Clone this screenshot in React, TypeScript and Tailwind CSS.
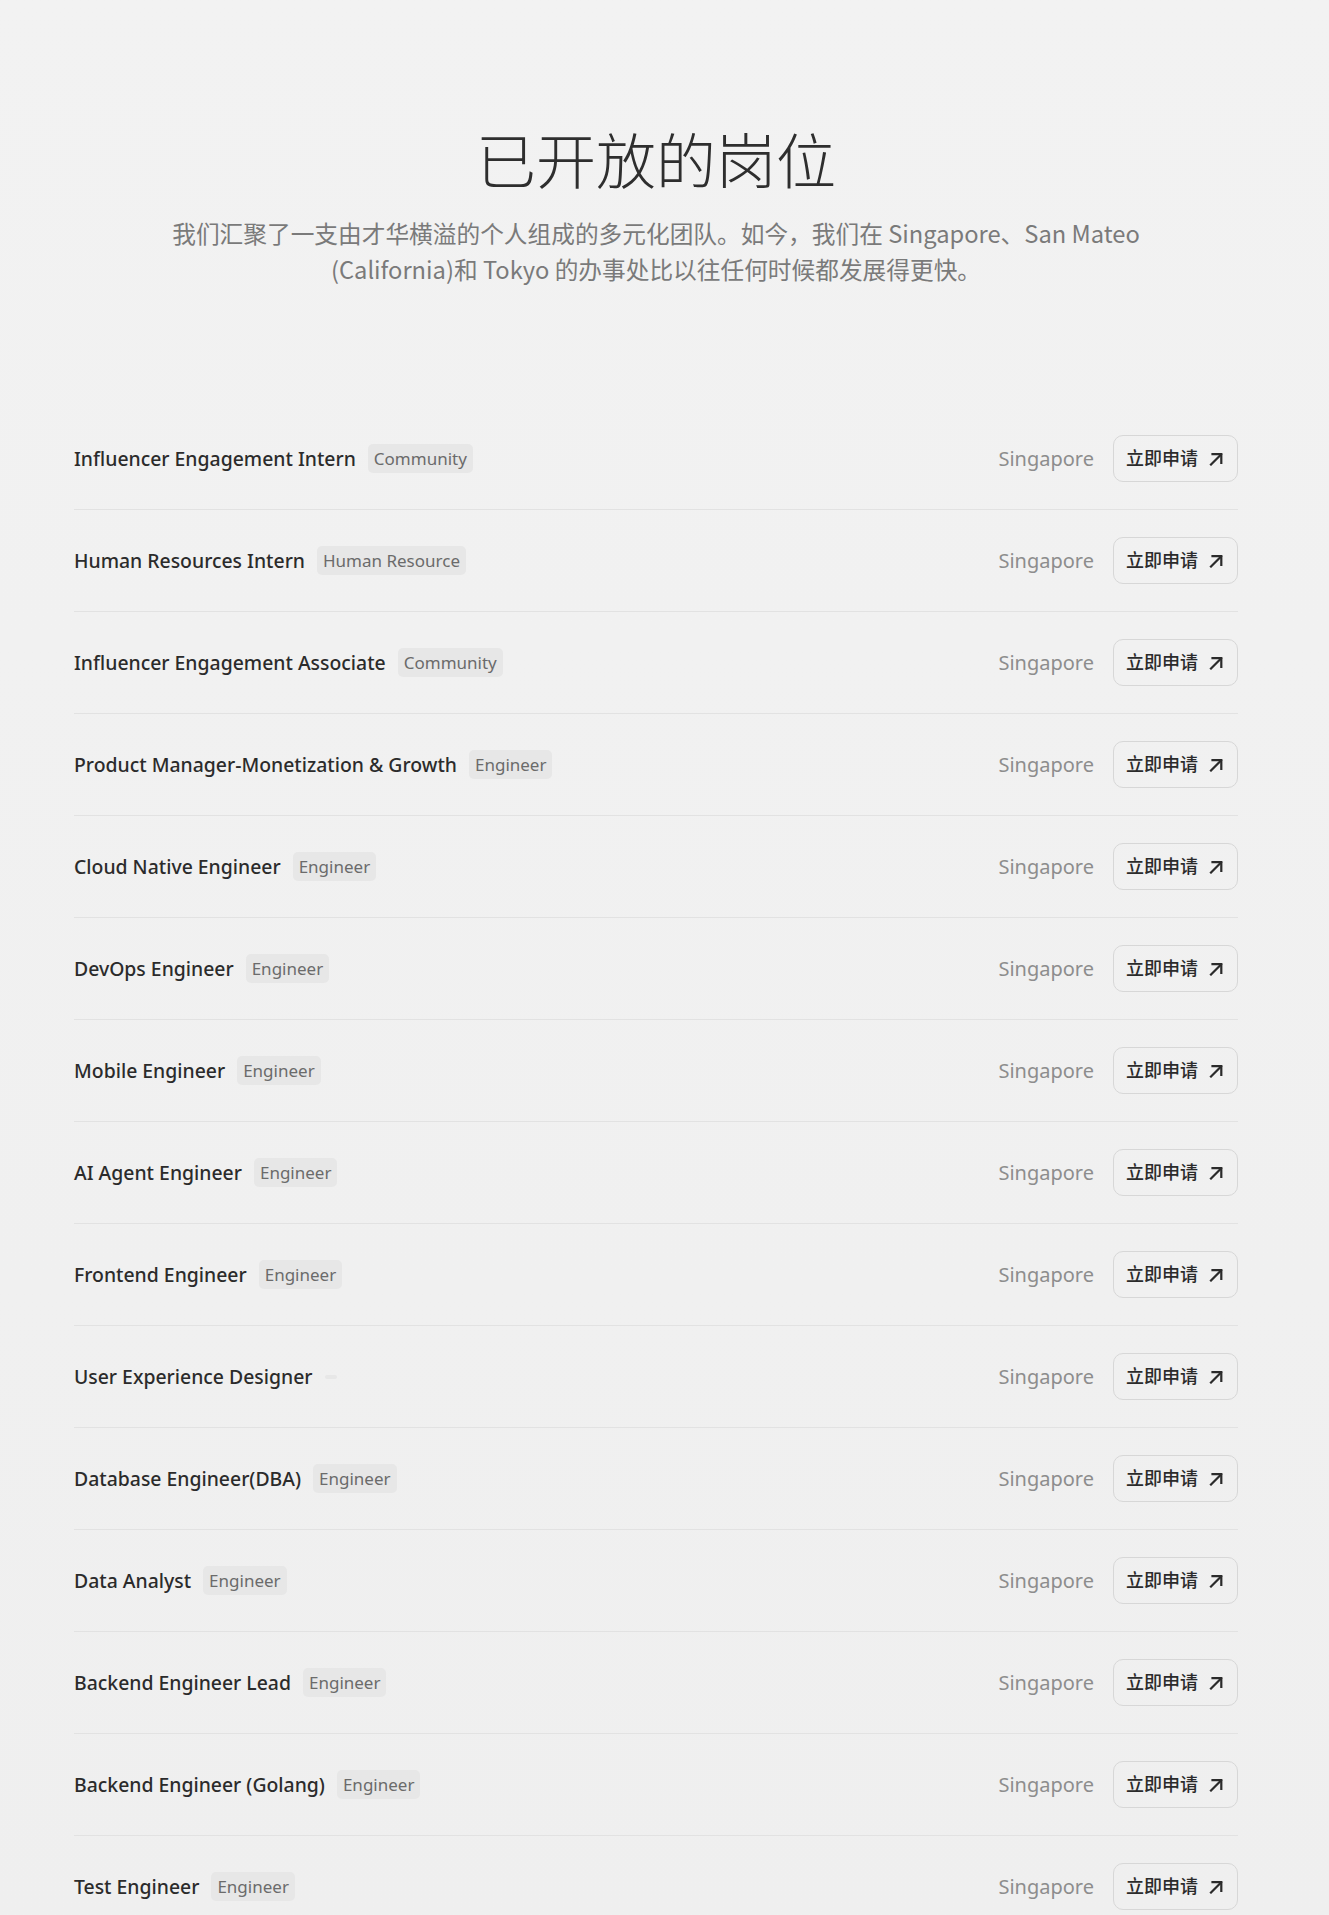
import React from 'react';

type Job = { title: string; tag: string };

const jobs: Job[] = [
  { title: 'Influencer Engagement Intern', tag: 'Community' },
  { title: 'Human Resources Intern', tag: 'Human Resource' },
  { title: 'Influencer Engagement Associate', tag: 'Community' },
  { title: 'Product Manager-Monetization & Growth', tag: 'Engineer' },
  { title: 'Cloud Native Engineer', tag: 'Engineer' },
  { title: 'DevOps Engineer', tag: 'Engineer' },
  { title: 'Mobile Engineer', tag: 'Engineer' },
  { title: 'AI Agent Engineer', tag: 'Engineer' },
  { title: 'Frontend Engineer', tag: 'Engineer' },
  { title: 'User Experience Designer', tag: '' },
  { title: 'Database Engineer(DBA)', tag: 'Engineer' },
  { title: 'Data Analyst', tag: 'Engineer' },
  { title: 'Backend Engineer Lead', tag: 'Engineer' },
  { title: 'Backend Engineer (Golang)', tag: 'Engineer' },
  { title: 'Test Engineer', tag: 'Engineer' },
];

const ArrowIcon = () => (
  <svg width="14" height="14" viewBox="0 0 14 14" fill="none" stroke="currentColor" strokeWidth="2.2" strokeLinecap="square">
    <path d="M2 12.5L12 2.5" />
    <path d="M3.5 2.2H12.3V11" />
  </svg>
);

const JobRow = ({ job }: { job: Job }) => (
  <div className="flex items-center justify-between border-b border-[#e2e2e2] py-[27px]">
    <div className="flex items-center gap-3">
      <span className="text-[19.4px] font-medium leading-[28px] text-[#2b2b2b]">{job.title}</span>
      <span className="rounded-[5px] bg-[#e7e7e7] px-[6px] py-[2px] text-[17px] leading-[25px] text-[#6b6b6b] empty:leading-[0px]">
        {job.tag}
      </span>
    </div>
    <div className="flex items-center gap-[19px]">
      <span className="text-[20px] text-[#8d8d8d]">Singapore</span>
      <button className="flex h-[47px] w-[125px] items-center gap-[11px] rounded-[10px] border border-[#d7d7d7] px-3 text-[18px] font-medium text-[#2b2b2b]">
        立即申请
        <ArrowIcon />
      </button>
    </div>
  </div>
);

export default function App() {
  return (
    <div
      className="min-h-[1915px] w-full bg-gradient-to-b from-[#f2f2f2] to-[#efefef]"
      style={{ fontFamily: '"Noto Sans", "Noto Sans CJK SC", sans-serif' }}
    >
      <div className="w-[1312px] px-[74px] pt-[122px]">
        <h1
          className="text-center text-[60px] font-light leading-[72px] text-[#2e2e2e]"
          style={{ fontFamily: '"Noto Sans CJK SC", sans-serif' }}
        >
          已开放的岗位
        </h1>
        <p
          className="mt-[21px] text-center text-[23.7px] leading-[36px] text-[#7a7a7a]"
          style={{ fontFamily: '"Noto Sans CJK SC", sans-serif' }}
        >
          我们汇聚了一支由才华横溢的个人组成的多元化团队。如今，我们在 Singapore、San Mateo
          <br />
          (California)和 Tokyo 的办事处比以往任何时候都发展得更快。
        </p>

        <div className="mt-[121px]">
          {jobs.map((job) => (
            <JobRow key={job.title} job={job} />
          ))}
        </div>
      </div>
    </div>
  );
}
